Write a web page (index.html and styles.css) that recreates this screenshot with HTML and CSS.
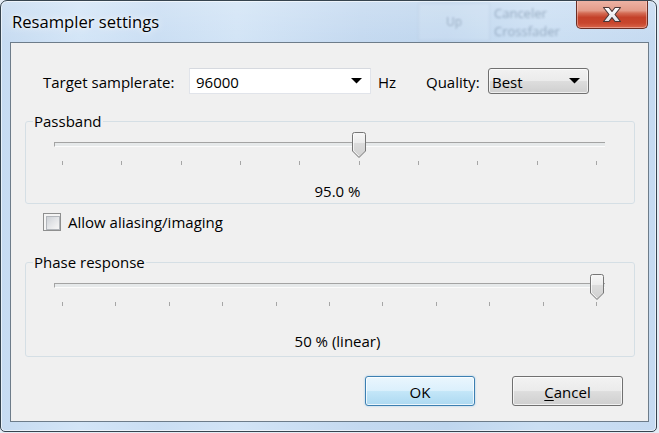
FILE: index.html
```html
<!DOCTYPE html>
<html>
<head>
<meta charset="utf-8">
<title>Resampler settings</title>
<link rel="stylesheet" href="styles.css">
</head>
<body>
<div class="window">
  <div class="titlebar">
    <span class="title">Resampler settings</span>
    <div class="ghost">
      <div class="ghost-box">Up</div>
      <div class="ghost-text">Canceler<br>Crossfader</div>
    </div>
    <div class="close">
      <svg width="22" height="17" viewBox="0 0 22 17">
        <defs>
          <linearGradient id="xg" x1="0" y1="0" x2="0" y2="1">
            <stop offset="0" stop-color="#ffffff"/>
            <stop offset="1" stop-color="#dfe3ea"/>
          </linearGradient>
        </defs>
        <polygon points="2.5,1.5 8,1.5 11,5.5 14,1.5 19.5,1.5 14,8.5 19.5,15.5 14,15.5 11,11.5 8,15.5 2.5,15.5 8,8.5" fill="url(#xg)" stroke="#4a3636" stroke-width="1.1" stroke-linejoin="round"/>
      </svg>
    </div>
  </div>
  <div class="client">
    <div class="rate-row">
      <span class="lbl-rate">Target samplerate:</span>
      <div class="combo edit"><span>96000</span><svg class="arrow" width="11" height="6" viewBox="0 0 11 6"><path d="M0 0H11L5.5 5.5Z"/></svg></div>
      <span class="unit">Hz</span>
      <span class="lbl-quality">Quality:</span>
      <div class="combo btn"><span>Best</span><svg class="arrow" width="11" height="6" viewBox="0 0 11 6"><path d="M0 0H11L5.5 5.5Z"/></svg></div>
    </div>

    <div class="group passband">
      <div class="group-label">Passband</div>
      <div class="slider">
        <div class="track"></div>
        <svg class="thumb" style="left:298px" width="14" height="26" viewBox="0 0 14 26">
          <defs>
            <linearGradient id="tg1" x1="0" y1="0" x2="0" y2="1">
              <stop offset="0" stop-color="#f7f7f7"/>
              <stop offset="0.4" stop-color="#ececec"/>
              <stop offset="0.42" stop-color="#dcdcdc"/>
              <stop offset="1" stop-color="#d0d0d0"/>
            </linearGradient>
          </defs>
          <path d="M0.5 2.5Q0.5 0.5 2.5 0.5H11.5Q13.5 0.5 13.5 2.5V19L7 25.5L0.5 19Z" fill="url(#tg1)" stroke="#767676"/>
          <path d="M1.5 2.8V18.6L7 24" fill="none" stroke="#ffffff" stroke-opacity="0.7"/>
        </svg>
        <div class="ticks">
          <i></i><i></i><i></i><i></i><i></i><i></i><i></i><i></i><i></i><i></i>
        </div>
      </div>
      <div class="value v1">95.0 %</div>
    </div>

    <div class="check-row">
      <span class="checkbox"></span>
      <span>Allow aliasing/imaging</span>
    </div>

    <div class="group phase">
      <div class="group-label">Phase response</div>
      <div class="slider">
        <div class="track"></div>
        <svg class="thumb" style="left:536px" width="14" height="26" viewBox="0 0 14 26">
          <defs>
            <linearGradient id="tg2" x1="0" y1="0" x2="0" y2="1">
              <stop offset="0" stop-color="#f7f7f7"/>
              <stop offset="0.4" stop-color="#ececec"/>
              <stop offset="0.42" stop-color="#dcdcdc"/>
              <stop offset="1" stop-color="#d0d0d0"/>
            </linearGradient>
          </defs>
          <path d="M0.5 2.5Q0.5 0.5 2.5 0.5H11.5Q13.5 0.5 13.5 2.5V19L7 25.5L0.5 19Z" fill="url(#tg2)" stroke="#767676"/>
          <path d="M1.5 2.8V18.6L7 24" fill="none" stroke="#ffffff" stroke-opacity="0.7"/>
        </svg>
        <div class="ticks">
          <i></i><i></i><i></i><i></i><i></i><i></i><i></i><i></i><i></i><i></i><i></i>
        </div>
      </div>
      <div class="value v2">50 % (linear)</div>
    </div>

    <div class="buttons">
      <div class="button default">OK</div>
      <div class="button"><u>C</u>ancel</div>
    </div>
  </div>
</div>
</body>
</html>
```

FILE: styles.css
```css
* { box-sizing: border-box; }

html, body {
  margin: 0;
  padding: 0;
}

body {
  width: 659px;
  height: 433px;
  overflow: hidden;
  background: #e4ecf5;
  font-family: "Open Sans", "Noto Sans", sans-serif;
  font-size: 15px;
  line-height: 20px;
  color: #000;
}

.window {
  width: 657px;
  height: 432px;
  border: 1px solid #36444f;
  border-radius: 7px 7px 5px 5px;
  background:
    linear-gradient(180deg, rgba(255,255,255,0.18) 0px, rgba(255,255,255,0) 42px),
    linear-gradient(90deg, #c6dbf1 0%, #d3e5f7 12%, #cadef3 24%, #d2e4f6 36%, #c4d9f0 55%, #bfd6ee 68%, #cbdff3 82%, #c5daf1 100%);
  box-shadow: inset 0 0 0 1px rgba(255,255,255,0.6);
  display: flex;
  flex-direction: column;
  overflow: hidden;
}

/* ---------- title bar ---------- */
.titlebar {
  height: 41px;
  display: flex;
  align-items: flex-start;
  flex: none;
}

.title {
  margin: 10px 0 0 11px;
  font-size: 16.6px;
  line-height: 22px;
  color: #000;
  text-shadow: 0 0 8px rgba(255,255,255,0.9), 0 0 3px rgba(255,255,255,0.9);
}

.ghost {
  margin-left: auto;
  display: flex;
  align-items: flex-start;
  filter: blur(1.3px);
  opacity: 0.5;
}

.ghost-box {
  width: 72px;
  height: 38px;
  margin-top: 2px;
  background: rgba(255,255,255,0.22);
  border: 1px solid rgba(140,160,185,0.35);
  color: #6f8297;
  font-size: 12px;
  text-align: center;
  line-height: 36px;
}

.ghost-text {
  margin: 3px 0 0 4px;
  width: 76px;
  font-size: 13px;
  line-height: 18px;
  color: #5f7690;
}

.close {
  width: 72px;
  height: 29px;
  margin: -1px 8px 0 6px;
  border: 1px solid #6a2d24;
  border-top: none;
  border-radius: 0 0 5px 5px;
  background: linear-gradient(180deg, #edb5a7 0%, #e39b89 38%, #d46c55 47%, #c4412a 62%, #c8462d 82%, #d8654a 100%);
  box-shadow: inset 0 0 0 1px rgba(255,220,210,0.45);
  display: flex;
  align-items: center;
  justify-content: center;
}

.close svg {
  display: block;
  margin-top: 1px;
}

/* ---------- client ---------- */
.client {
  margin-left: 9px;
  width: 639px;
  height: 380px;
  border: 1px solid #6d7c8a;
  background: #f0f0f0;
  padding-top: 25px;
  display: flex;
  flex-direction: column;
}

.rate-row {
  display: flex;
  align-items: center;
  height: 26px;
  padding-left: 32px;
  flex: none;
}

.lbl-rate {
  width: 146px;
  padding-top: 1px;
}

.combo {
  height: 26px;
  display: flex;
  align-items: center;
  justify-content: space-between;
}

.combo span {
  padding-top: 1px;
}

.combo.edit {
  width: 182px;
  background: #fff;
  border: 1px solid #e1e4ea;
  border-top-color: #d6d9df;
  padding: 0 8px 0 6px;
}

.combo.btn {
  width: 101px;
  border: 1px solid #707070;
  border-radius: 3px;
  background: linear-gradient(180deg, #f2f2f2 0%, #ebebeb 48%, #dddddd 52%, #cfcfcf 100%);
  box-shadow: inset 0 0 0 1px rgba(255,255,255,0.65);
  padding: 0 8px 0 3px;
}

.arrow {
  display: block;
  fill: #000;
}

.unit {
  width: 55px;
  padding: 1px 0 0 7px;
}

.lbl-quality {
  width: 62px;
  padding-top: 1px;
}

/* ---------- group boxes ---------- */
.group {
  width: 610px;
  margin-left: 14px;
  padding: 0 0 2px 7px;
  border: 1px solid #d5dfe5;
  border-radius: 3px;
  flex: none;
}

.group-label {
  width: fit-content;
  margin-top: -11px;
  padding: 0 1px;
  line-height: 20px;
  background: #f0f0f0;
}

.passband {
  margin-top: 27px;
}

.phase {
  margin-top: 31px;
  padding-bottom: 5px;
}

.slider {
  position: relative;
  width: 551px;
  height: 34px;
  margin: 1px 0 0 21px;
  padding-top: 10px;
}

.track {
  height: 5px;
  border-top: 1px solid #a3a3a3;
  border-left: 1px solid #a3a3a3;
  border-bottom: 1px solid #fbfbfb;
  background: #e6e9ea;
}

.thumb {
  position: absolute;
  top: 0;
  display: block;
}

.phase .thumb {
  top: 1px;
}

.ticks {
  margin-top: 14px;
  padding: 0 8px;
  height: 4px;
  display: flex;
  justify-content: space-between;
}

.ticks i {
  display: block;
  width: 1px;
  height: 4px;
  background: #a6a6a6;
}

.value {
  text-align: center;
  padding-left: 8px;
}

.v1 {
  margin-top: 15px;
}

.v2 {
  margin-top: 24px;
}

/* ---------- checkbox ---------- */
.check-row {
  display: flex;
  align-items: center;
  height: 18px;
  margin-top: 9px;
  padding-left: 32px;
  gap: 7px;
  flex: none;
}

.checkbox {
  width: 18px;
  height: 18px;
  border: 1px solid #8e8f8f;
  background: #f4f4f4;
  padding: 2px;
  flex: none;
}

.checkbox::before {
  content: "";
  display: block;
  width: 100%;
  height: 100%;
  border: 1px solid #b2b6bb;
  background: linear-gradient(135deg, #cdd1d6 0%, #e4e6e9 50%, #f7f7f7 100%);
}

/* ---------- buttons ---------- */
.buttons {
  display: flex;
  justify-content: flex-end;
  gap: 37px;
  margin-top: 19px;
  padding-right: 25px;
  flex: none;
}

.button {
  width: 111px;
  height: 30px;
  border: 1px solid #707070;
  border-radius: 3px;
  background: linear-gradient(180deg, #f2f2f2 0%, #ebebeb 48%, #dddddd 52%, #cfcfcf 100%);
  box-shadow: inset 0 0 0 1px rgba(255,255,255,0.7);
  display: flex;
  align-items: center;
  justify-content: center;
  padding-top: 1px;
}

.button.default {
  width: 110px;
  border-color: #3c7fb1;
  background: linear-gradient(180deg, #eaf6fd 0%, #dbf0fc 48%, #c3e6f8 52%, #add9f1 100%);
  box-shadow: inset 0 0 0 1px rgba(255,255,255,0.75), 0 0 2px rgba(90,170,230,0.6);
}

.button u {
  text-decoration: underline;
  text-underline-offset: 2px;
}
```
